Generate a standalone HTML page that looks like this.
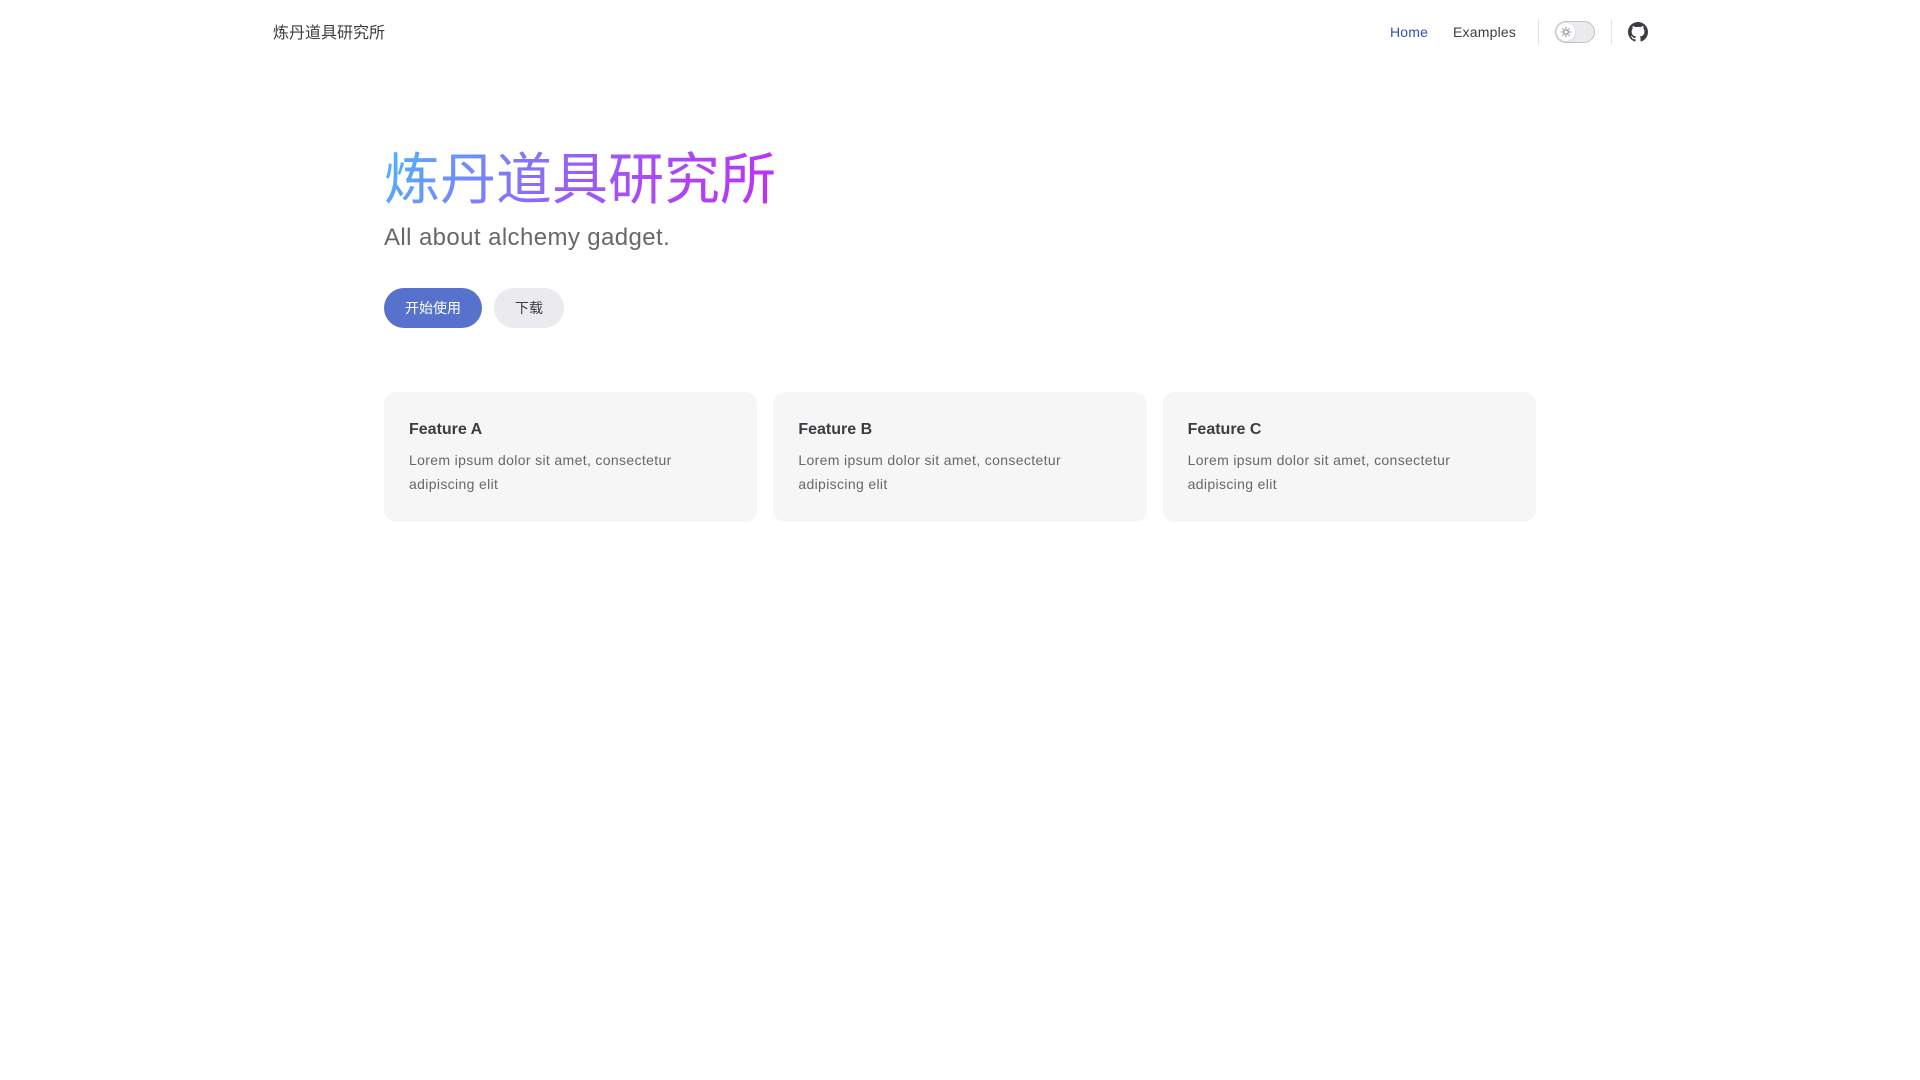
<!DOCTYPE html>
<html><head><meta charset="utf-8"><style>
*{box-sizing:border-box;margin:0;padding:0}
body{width:1920px;height:1080px;background:#fff;font-family:"Liberation Sans","Noto Sans CJK SC",sans-serif;color:#3c3c43;position:relative;overflow:hidden}
.logo{position:absolute;left:273px;top:22px;font-size:16px;line-height:24px;color:#3c3c43;font-weight:400}
.nav{position:absolute;top:20px;font-size:14px;line-height:24px;font-weight:500;letter-spacing:.2px}
.div{position:absolute;top:20px;width:1px;height:24px;background:#e2e2e3}
.tog{position:absolute;left:1555px;top:21px;width:40px;height:22px;border-radius:11px;border:1px solid #c2c2c4;background:#ebebef}
.tog .k{position:absolute;left:1px;top:1px;width:18px;height:18px;border-radius:50%;background:#fff;box-shadow:0 1px 2px rgba(0,0,0,.1)}
h1{position:absolute;left:384px;top:144px;font-size:56px;line-height:64px;font-weight:400;background:linear-gradient(120deg,#4fb4ff 0%,#9a5cf5 50%,#c02ef5 100%);-webkit-background-clip:text;background-clip:text;color:transparent;font-family:"Noto Sans CJK SC",sans-serif}
.tag{position:absolute;left:384px;top:222px;font-size:24px;line-height:32px;color:#67676c;font-weight:500;letter-spacing:.4px}
.btn{position:absolute;top:288px;height:40px;border-radius:20px;font-size:14px;line-height:40px;text-align:center;font-weight:400}
.cards{position:absolute;left:384px;top:392px;width:1152px;display:grid;grid-template-columns:repeat(3,1fr);gap:16px}
.card{background:#f6f6f7;border-radius:12px;height:130px;padding:26px 24px 0 25px}
.card h2{font-size:16px;line-height:24px;font-weight:600;color:#3c3c43}
.card p{margin-top:6px;font-size:14px;line-height:24px;color:#67676c;letter-spacing:.35px}
</style></head><body>
<div class="logo">炼丹道具研究所</div>
<div class="nav" style="left:1390px;color:#3451b2">Home</div>
<div class="nav" style="left:1453px">Examples</div>
<div class="div" style="left:1538px"></div>
<div class="tog"><div class="k"><svg width="18" height="18" viewBox="0 0 18 18"><g stroke="#777" stroke-width="1" fill="none"><circle cx="9" cy="9" r="2.3"/><path d="M9 4v1.5M9 12.5V14M4 9h1.5M12.5 9H14M5.5 5.5l1 1M11.5 11.5l1 1M5.5 12.5l1-1M11.5 6.5l1-1"/></g></svg></div></div>
<div class="div" style="left:1611px"></div>
<svg style="position:absolute;left:1628px;top:22px" width="20" height="20" viewBox="0 0 16 16"><path fill="#3c3c43" d="M8 0C3.58 0 0 3.58 0 8c0 3.54 2.29 6.530 5.47 7.590.4.07.55-.17.55-.38 0-.19-.01-.82-.01-1.490-2.010.37-2.530-.49-2.690-.94-.09-.23-.48-.94-.82-1.130-.28-.15-.68-.52-.01-.53.63-.01 1.080.58 1.230.82.72 1.210 1.870.87 2.330.66.07-.52.28-.87.51-1.070-1.780-.2-3.640-.89-3.640-3.950 0-.87.31-1.590.82-2.150-.08-.2-.36-1.020.08-2.120 0 0 .67-.21 2.2.82.64-.18 1.320-.27 2-.27.68 0 1.360.09 2 .27 1.530-1.040 2.2-.82 2.2-.82.44 1.1.16 1.920.08 2.120.51.56.82 1.270.82 2.150 0 3.070-1.870 3.750-3.650 3.950.29.25.54.73.54 1.480 0 1.070-.01 1.930-.01 2.2 0 .21.15.46.55.38A8.010 8.010 0 0016 8c0-4.420-3.580-8-8-8z"/></svg>
<h1>炼丹道具研究所</h1>
<div class="tag">All about alchemy gadget.</div>
<div class="btn" style="left:384px;width:98px;background:#5672cd;color:#fff">开始使用</div>
<div class="btn" style="left:494px;width:70px;background:#ebebef;color:#3c3c43">下载</div>
<div class="cards">
<div class="card"><h2>Feature A</h2><p>Lorem ipsum dolor sit amet, consectetur<br>adipiscing elit</p></div>
<div class="card"><h2>Feature B</h2><p>Lorem ipsum dolor sit amet, consectetur<br>adipiscing elit</p></div>
<div class="card"><h2>Feature C</h2><p>Lorem ipsum dolor sit amet, consectetur<br>adipiscing elit</p></div>
</div>
</body></html>
